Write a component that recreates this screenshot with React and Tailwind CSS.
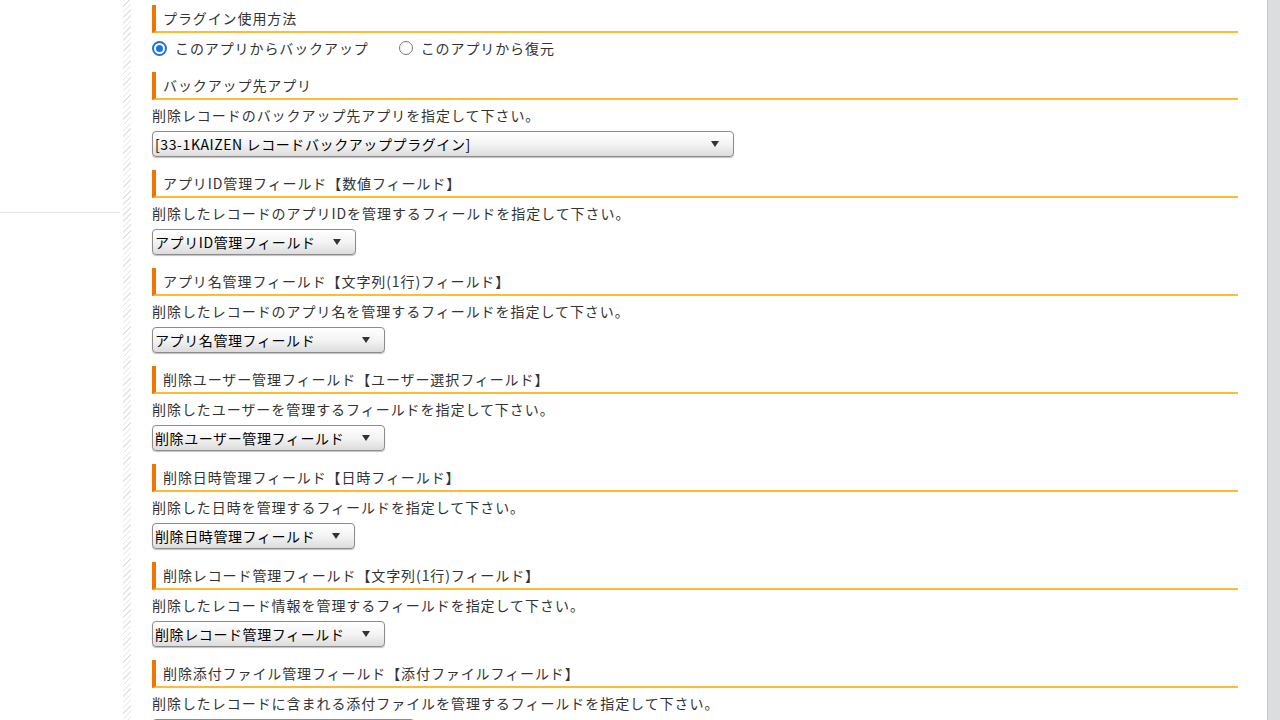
const FONT = { fontFamily: '"Hiragino Kaku Gothic ProN", "Noto Sans CJK JP", "Noto Sans", sans-serif' };

const fields = [
  {
    title: 'アプリID管理フィールド【数値フィールド】',
    desc: '削除したレコードのアプリIDを管理するフィールドを指定して下さい。',
    value: 'アプリID管理フィールド',
    width: 'w-[204px]',
  },
  {
    title: 'アプリ名管理フィールド【文字列(1行)フィールド】',
    desc: '削除したレコードのアプリ名を管理するフィールドを指定して下さい。',
    value: 'アプリ名管理フィールド',
    width: 'w-[233px]',
  },
  {
    title: '削除ユーザー管理フィールド【ユーザー選択フィールド】',
    desc: '削除したユーザーを管理するフィールドを指定して下さい。',
    value: '削除ユーザー管理フィールド',
    width: 'w-[233px]',
  },
  {
    title: '削除日時管理フィールド【日時フィールド】',
    desc: '削除した日時を管理するフィールドを指定して下さい。',
    value: '削除日時管理フィールド',
    width: 'w-[203px]',
  },
  {
    title: '削除レコード管理フィールド【文字列(1行)フィールド】',
    desc: '削除したレコード情報を管理するフィールドを指定して下さい。',
    value: '削除レコード管理フィールド',
    width: 'w-[233px]',
  },
  {
    title: '削除添付ファイル管理フィールド【添付ファイルフィールド】',
    desc: '削除したレコードに含まれる添付ファイルを管理するフィールドを指定して下さい。',
    value: '削除添付ファイル管理フィールド',
    width: 'w-[263px]',
  },
];

// section title with orange bar + yellow underline
const Heading = ({ children }) => (
  <div className="h-[28px] border-l-4 border-b-2 border-l-[#f07400] border-b-[#ffbb33] pl-[7px] flex items-center text-[14px] tracking-[0.9px] text-[#333]">
    {children}
  </div>
);

const Select = ({ value, width }) => (
  <div
    className={`${width} h-[26px] flex items-center justify-between pl-[2px] pr-[14px] rounded-[4px] border border-[#8c8c8c] bg-gradient-to-b from-white via-[#f4f4f4] to-[#dcdcdc] shadow-[0_1px_1px_rgba(0,0,0,0.25)] text-[14px] tracking-[0.6px] text-black`}
  >
    <span className="whitespace-nowrap overflow-hidden">{value}</span>
    <svg width="8" height="6" viewBox="0 0 8 6" className="shrink-0 ml-2">
      <polygon points="0,0 8,0 4,6" fill="#333" />
    </svg>
  </div>
);

const Radio = ({ checked, label }) => (
  <label className="flex items-center gap-[8px] text-[14px] tracking-[0.9px] text-[#333]">
    {checked ? (
      <span className="w-[15px] h-[15px] rounded-full border-[2px] border-[#1a73e8] flex items-center justify-center bg-white">
        <span className="w-[7px] h-[7px] rounded-full bg-[#1a73e8]" />
      </span>
    ) : (
      <span className="w-[14px] h-[14px] rounded-full border border-[#777] bg-white" />
    )}
    {label}
  </label>
);

export default function App() {
  return (
    <div className="w-[1280px] h-[720px] overflow-hidden bg-white flex" style={FONT}>
      {/* left menu area */}
      <div className="w-[123px] shrink-0">
        <div className="h-[213px] w-[120px] border-b border-[#e6e6e6]" />
      </div>
      <div className="w-[8px] shrink-0 bg-[repeating-linear-gradient(135deg,#e4e4e4_0,#e4e4e4_1px,transparent_1px,transparent_4px)]" />

      {/* settings */}
      <div className="flex-1 pl-[21px] pr-[29px] pt-[5px]">
        <Heading>プラグイン使用方法</Heading>
        <div className="mt-[5px] h-[20px] flex items-center gap-[30px]">
          <Radio checked label="このアプリからバックアップ" />
          <Radio label="このアプリから復元" />
        </div>

        <div className="mt-[14px]">
          <Heading>バックアップ先アプリ</Heading>
          <p className="mt-[5px] h-[20px] leading-[20px] text-[14px] tracking-[0.95px] text-[#333]">
            削除レコードのバックアップ先アプリを指定して下さい。
          </p>
          <div className="mt-[6px]">
            <Select value="[33-1KAIZEN レコードバックアッププラグイン]" width="w-[582px]" />
          </div>
        </div>

        {fields.map((f) => (
          <div key={f.title} className="mt-[13px]">
            <Heading>{f.title}</Heading>
            <p className="mt-[5px] h-[20px] leading-[20px] text-[14px] tracking-[0.95px] text-[#333] whitespace-nowrap">
              {f.desc}
            </p>
            <div className="mt-[6px]">
              <Select value={f.value} width={f.width} />
            </div>
          </div>
        ))}
      </div>

      {/* scrollbar */}
      <div className="w-[13px] shrink-0 bg-[#dcdddf] border-l border-[#c4c4c4]" />
    </div>
  );
}
